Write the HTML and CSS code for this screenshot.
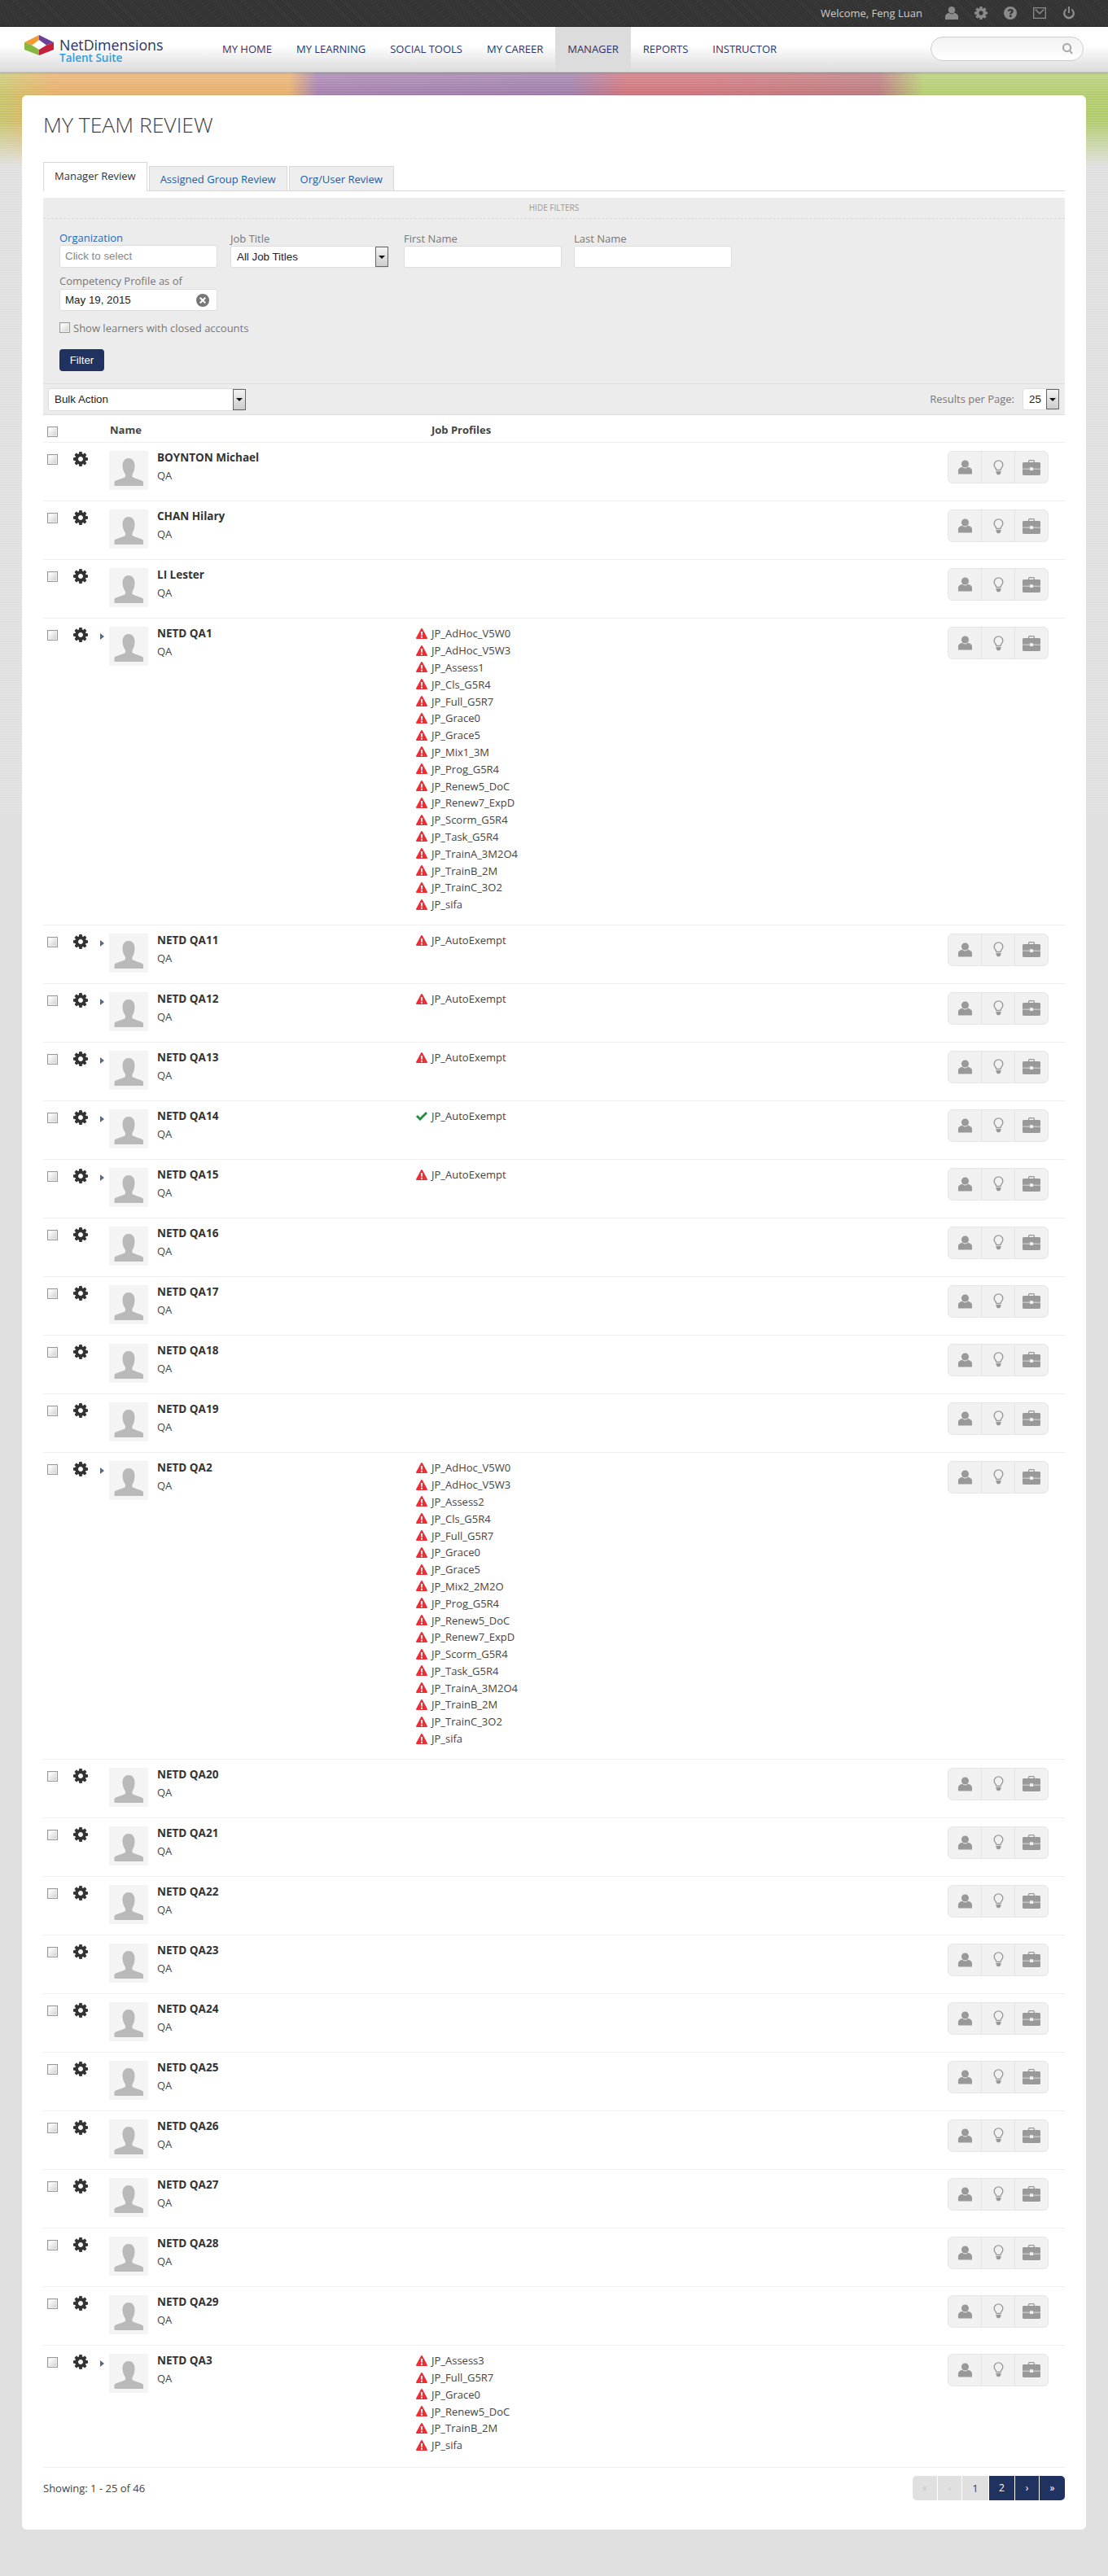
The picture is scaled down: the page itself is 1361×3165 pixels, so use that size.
FILE: index.html
```html
<!DOCTYPE html>
<html lang="en">
<head>
    <meta charset="UTF-8">
    <title>My Team Review</title>
    <link rel="stylesheet" href="styles.css">
</head>
<body>
    <svg class="sprite">
        <symbol id="i-gear" viewBox="0 0 1536 1536"><path d="M1024 768q0-106-75-181t-181-75-181 75-75 181 75 181 181 75 181-75 75-181zm512-109v222q0 12-8 23t-20 13l-185 28q-19 54-39 91 35 50 107 138 10 12 10 25t-9 23q-27 37-99 108t-94 71q-12 0-26-9l-138-108q-44 23-91 38-16 136-29 186-7 28-36 28h-222q-14 0-24.500-8.500t-11.500-21.500l-28-184q-49-16-90-37l-141 107q-10 9-25 9-14 0-25-11-126-114-165-168-7-10-7-23 0-12 8-23 15-21 51-66.500t54-70.500q-27-50-41-99l-183-27q-13-2-21-12.500t-8-23.500v-222q0-12 8-23t19-13l186-28q14-46 39-92-40-57-107-138-10-12-10-24 0-10 9-23 26-36 98.500-107.500t94.500-71.500q13 0 26 10l138 107q44-23 91-38 16-136 29-186 7-28 36-28h222q14 0 24.500 8.500t11.500 21.500l28 184q49 16 90 37l142-107q9-9 24-9 13 0 25 10 129 119 165 170 7 8 7 22 0 12-8 23-15 21-51 66.500t-54 70.500q26 50 41 98l183 28q13 2 21 12.500t8 23.500z"/></symbol>
        <symbol id="i-user" viewBox="0 0 18 18"><circle cx="9" cy="4.800" r="4.800"/><path d="M0 18v-4.500C0 11 3 9.300 5.300 8.800 6.300 9.900 7.600 10.500 9 10.500s2.700-.6 3.700-1.700C15 9.300 18 11 18 13.500V18z"/></symbol>
        <symbol id="i-bulb" viewBox="0 0 14 20"><path fill-rule="evenodd" d="M7 0a6.500 6.500 0 0 1 6.500 6.500c0 2.600-1.800 3.800-2.500 5.500-.3.700-.4 1.200-.5 1.700h-7c-.1-.5-.2-1-.5-1.700C2.300 10.300.5 9.100.5 6.500A6.500 6.500 0 0 1 7 0zm0 1.500a5 5 0 0 0-5 5c0 2 1.500 3 2.300 4.800.2.500.4.900.5 1.200h4.400c.1-.3.300-.7.500-1.200C10.500 9.500 12 8.500 12 6.500a5 5 0 0 0-5-5z"/><path d="M3.800 14.500h6.400v2.500L8.500 19.500h-3L3.800 17z"/></symbol>
        <symbol id="i-case" viewBox="0 0 22 19"><path fill-rule="evenodd" d="M7 3V1.500C7 .7 7.700 0 8.500 0h5C14.300 0 15 .7 15 1.500V3h5.500c.8 0 1.500.7 1.500 1.500v6.300h-9V9.300H9v1.500H0V4.500C0 3.700.7 3 1.500 3zm1.300 0h5.400V1.300H8.300z"/><path d="M0 11.400h9V13h4v-1.600h9v6.100c0 .8-.7 1.500-1.500 1.500h-19C.7 19 0 18.300 0 17.500z"/></symbol>
        <symbol id="i-help" viewBox="0 0 16 16"><path fill-rule="evenodd" d="M8 0a8 8 0 1 1 0 16A8 8 0 0 1 8 0zM7 10.500v2.500h2.500v-2.500zM8.200 3C6.300 3 5 4 4.700 5.700l2.300.4c.1-.7.500-1.100 1.100-1.100.6 0 1 .3 1 .9 0 .5-.3.800-.9 1.300C7.400 7.800 7 8.400 7 9.600h2.400c0-.6.200-.9.900-1.400.8-.6 1.500-1.300 1.500-2.500C11.800 4 10.300 3 8.200 3z"/></symbol>
        <symbol id="i-mail" viewBox="0 0 18 16"><path fill-rule="evenodd" d="M0 0h18v16H0zm1.500 1.500v13h15v-13zm1 1.500h1.800L9 7.800 13.700 3h1.800v.6L9 10 2.500 3.600z"/></symbol>
        <symbol id="i-power" viewBox="0 0 16 18"><path d="M6.800 0h2.400v9H6.800z"/><path d="M4.500 2.600v2.700a5.200 5.200 0 1 0 7 0V2.600a7.800 7.800 0 1 1-7 0z"/></symbol>
        <symbol id="i-search" viewBox="0 0 14 15"><path fill-rule="evenodd" d="M6 0a6 6 0 0 1 4.800 9.600l3 3.600-1.700 1.500-3-3.700A6 6 0 1 1 6 0zm0 2.200a3.800 3.800 0 1 0 0 7.600 3.800 3.800 0 0 0 0-7.600z"/></symbol>
        <symbol id="i-warn" viewBox="0 0 14 13"><path fill-rule="evenodd" d="M7 0c.4 0 .7.200.9.500l5.900 11c.3.600-.1 1.500-.9 1.500H1.100c-.8 0-1.200-.9-.9-1.500L6.100.5C6.300.2 6.600 0 7 0zM5.900 4l.3 4.800h1.600L8.100 4zm.1 5.800v2h2v-2z"/></symbol>
        <symbol id="i-ok" viewBox="0 0 14 11"><path d="M5 11 0 6l2-2 3 3 7-7 2 2z"/></symbol>
        <symbol id="i-person" viewBox="0 0 48 48"><path d="M24 9c4.500 0 7.500 3.200 7.500 9.500 0 4.500-1.500 8-3 10.500v3c1.500 1.500 12 3.500 13.500 6v5H6.500v-5c1.500-2.500 12-4.500 13.500-6v-3c-1.500-2.500-3.500-6-3.500-10.500C16.500 12.200 19.500 9 24 9z"/></symbol>
        <symbol id="i-clear" viewBox="0 0 16 16"><path fill-rule="evenodd" d="M8 0a8 8 0 1 1 0 16A8 8 0 0 1 8 0zM5.500 4 4 5.500 6.500 8 4 10.500 5.500 12 8 9.500l2.500 2.500 1.500-1.500L9.500 8 12 5.500 10.500 4 8 6.500z"/></symbol>
    </svg>

    <div class="topbar">
        <span class="welcome">Welcome, Feng Luan</span>
        <svg class="top-icon"><use href="#i-user"/></svg>
        <svg class="top-icon"><use href="#i-gear"/></svg>
        <svg class="top-icon"><use href="#i-help"/></svg>
        <svg class="top-icon"><use href="#i-mail"/></svg>
        <svg class="top-icon"><use href="#i-power"/></svg>
    </div>

    <div class="nav">
        <div class="logo">
            <svg class="logo-mark" viewBox="0 0 36 25">
                <polygon fill="#f59a2f" points="18,0 0,9 9,12.500 18,6"/>
                <polygon fill="#6c3f98" points="18,0 36,9 27,12.500 18,6"/>
                <polygon fill="#c4203c" points="36,9 36,18 18,25 18,18 27,12.500"/>
                <polygon fill="#86b83f" points="0,9 9,12.500 18,18 18,25 0,18"/>
            </svg>
            <div class="logo-text">
                <div class="logo-name">NetDimensions</div>
                <div class="logo-sub">Talent Suite</div>
            </div>
        </div>
        <div class="menu">
            <a class="menu-item">My Home</a>
            <a class="menu-item">My Learning</a>
            <a class="menu-item">Social Tools</a>
            <a class="menu-item">My Career</a>
            <a class="menu-item active">Manager</a>
            <a class="menu-item">Reports</a>
            <a class="menu-item">Instructor</a>
        </div>
        <div class="search">
            <svg class="search-icon"><use href="#i-search"/></svg>
        </div>
    </div>

    <div class="card">
        <h1>My Team Review</h1>

        <div class="tabs">
            <a class="tab active">Manager Review</a>
            <a class="tab">Assigned Group Review</a>
            <a class="tab">Org/User Review</a>
        </div>

        <div class="filters">
            <div class="hide-filters">Hide Filters</div>
            <div class="filter-body">
                <div class="filter-grid">
                    <div>
                        <div class="field-label link">Organization</div>
                        <div class="input placeholder">Click to select</div>
                    </div>
                    <div class="shifted">
                        <div class="field-label">Job Title</div>
                        <div class="select job-select">
                            <span>All Job Titles</span>
                            <span class="select-arrow"></span>
                        </div>
                    </div>
                    <div class="shifted">
                        <div class="field-label">First Name</div>
                        <div class="input"></div>
                    </div>
                    <div class="shifted">
                        <div class="field-label">Last Name</div>
                        <div class="input"></div>
                    </div>
                </div>
                <div class="field-label date-label">Competency Profile as of</div>
                <div class="input date-input">
                    <span>May 19, 2015</span>
                    <svg class="clear-icon"><use href="#i-clear"/></svg>
                </div>
                <label class="closed-accounts"><span class="check"></span>Show learners with closed accounts</label>
                <button class="filter-btn">Filter</button>
            </div>
            <div class="bulk-bar">
                <div class="select bulk-select">
                    <span>Bulk Action</span>
                    <span class="select-arrow"></span>
                </div>
                <div class="per-page">
                    <span>Results per Page:</span>
                    <div class="select page-select">
                        <span>25</span>
                        <span class="select-arrow"></span>
                    </div>
                </div>
            </div>
        </div>

        <div class="list-head">
            <span class="check"></span>
            <span class="head-name">Name</span>
            <span class="head-jobs">Job Profiles</span>
        </div>

        <div class="row">
            <span class="check"></span><svg class="gear"><use href="#i-gear"/></svg><span></span>
            <div class="avatar"><svg><use href="#i-person"/></svg></div>
            <div><div class="name">BOYNTON Michael</div><div class="role">QA</div></div>
            <div></div>
            <div class="actions"><a><svg class="a-user"><use href="#i-user"/></svg></a><a><svg class="a-bulb"><use href="#i-bulb"/></svg></a><a><svg class="a-case"><use href="#i-case"/></svg></a></div>
        </div>
        <div class="row">
            <span class="check"></span><svg class="gear"><use href="#i-gear"/></svg><span></span>
            <div class="avatar"><svg><use href="#i-person"/></svg></div>
            <div><div class="name">CHAN Hilary</div><div class="role">QA</div></div>
            <div></div>
            <div class="actions"><a><svg class="a-user"><use href="#i-user"/></svg></a><a><svg class="a-bulb"><use href="#i-bulb"/></svg></a><a><svg class="a-case"><use href="#i-case"/></svg></a></div>
        </div>
        <div class="row">
            <span class="check"></span><svg class="gear"><use href="#i-gear"/></svg><span></span>
            <div class="avatar"><svg><use href="#i-person"/></svg></div>
            <div><div class="name">LI Lester</div><div class="role">QA</div></div>
            <div></div>
            <div class="actions"><a><svg class="a-user"><use href="#i-user"/></svg></a><a><svg class="a-bulb"><use href="#i-bulb"/></svg></a><a><svg class="a-case"><use href="#i-case"/></svg></a></div>
        </div>
        <div class="row">
            <span class="check"></span><svg class="gear"><use href="#i-gear"/></svg><span class="caret"></span>
            <div class="avatar"><svg><use href="#i-person"/></svg></div>
            <div><div class="name">NETD QA1</div><div class="role">QA</div></div>
            <div class="jobs">
                <div class="job"><svg class="warn"><use href="#i-warn"/></svg>JP_AdHoc_V5W0</div>
                <div class="job"><svg class="warn"><use href="#i-warn"/></svg>JP_AdHoc_V5W3</div>
                <div class="job"><svg class="warn"><use href="#i-warn"/></svg>JP_Assess1</div>
                <div class="job"><svg class="warn"><use href="#i-warn"/></svg>JP_Cls_G5R4</div>
                <div class="job"><svg class="warn"><use href="#i-warn"/></svg>JP_Full_G5R7</div>
                <div class="job"><svg class="warn"><use href="#i-warn"/></svg>JP_Grace0</div>
                <div class="job"><svg class="warn"><use href="#i-warn"/></svg>JP_Grace5</div>
                <div class="job"><svg class="warn"><use href="#i-warn"/></svg>JP_Mix1_3M</div>
                <div class="job"><svg class="warn"><use href="#i-warn"/></svg>JP_Prog_G5R4</div>
                <div class="job"><svg class="warn"><use href="#i-warn"/></svg>JP_Renew5_DoC</div>
                <div class="job"><svg class="warn"><use href="#i-warn"/></svg>JP_Renew7_ExpD</div>
                <div class="job"><svg class="warn"><use href="#i-warn"/></svg>JP_Scorm_G5R4</div>
                <div class="job"><svg class="warn"><use href="#i-warn"/></svg>JP_Task_G5R4</div>
                <div class="job"><svg class="warn"><use href="#i-warn"/></svg>JP_TrainA_3M2O4</div>
                <div class="job"><svg class="warn"><use href="#i-warn"/></svg>JP_TrainB_2M</div>
                <div class="job"><svg class="warn"><use href="#i-warn"/></svg>JP_TrainC_3O2</div>
                <div class="job"><svg class="warn"><use href="#i-warn"/></svg>JP_sifa</div>
            </div>
            <div class="actions"><a><svg class="a-user"><use href="#i-user"/></svg></a><a><svg class="a-bulb"><use href="#i-bulb"/></svg></a><a><svg class="a-case"><use href="#i-case"/></svg></a></div>
        </div>
        <div class="row">
            <span class="check"></span><svg class="gear"><use href="#i-gear"/></svg><span class="caret"></span>
            <div class="avatar"><svg><use href="#i-person"/></svg></div>
            <div><div class="name">NETD QA11</div><div class="role">QA</div></div>
            <div class="jobs"><div class="job"><svg class="warn"><use href="#i-warn"/></svg>JP_AutoExempt</div></div>
            <div class="actions"><a><svg class="a-user"><use href="#i-user"/></svg></a><a><svg class="a-bulb"><use href="#i-bulb"/></svg></a><a><svg class="a-case"><use href="#i-case"/></svg></a></div>
        </div>
        <div class="row">
            <span class="check"></span><svg class="gear"><use href="#i-gear"/></svg><span class="caret"></span>
            <div class="avatar"><svg><use href="#i-person"/></svg></div>
            <div><div class="name">NETD QA12</div><div class="role">QA</div></div>
            <div class="jobs"><div class="job"><svg class="warn"><use href="#i-warn"/></svg>JP_AutoExempt</div></div>
            <div class="actions"><a><svg class="a-user"><use href="#i-user"/></svg></a><a><svg class="a-bulb"><use href="#i-bulb"/></svg></a><a><svg class="a-case"><use href="#i-case"/></svg></a></div>
        </div>
        <div class="row">
            <span class="check"></span><svg class="gear"><use href="#i-gear"/></svg><span class="caret"></span>
            <div class="avatar"><svg><use href="#i-person"/></svg></div>
            <div><div class="name">NETD QA13</div><div class="role">QA</div></div>
            <div class="jobs"><div class="job"><svg class="warn"><use href="#i-warn"/></svg>JP_AutoExempt</div></div>
            <div class="actions"><a><svg class="a-user"><use href="#i-user"/></svg></a><a><svg class="a-bulb"><use href="#i-bulb"/></svg></a><a><svg class="a-case"><use href="#i-case"/></svg></a></div>
        </div>
        <div class="row">
            <span class="check"></span><svg class="gear"><use href="#i-gear"/></svg><span class="caret"></span>
            <div class="avatar"><svg><use href="#i-person"/></svg></div>
            <div><div class="name">NETD QA14</div><div class="role">QA</div></div>
            <div class="jobs"><div class="job"><svg class="ok"><use href="#i-ok"/></svg>JP_AutoExempt</div></div>
            <div class="actions"><a><svg class="a-user"><use href="#i-user"/></svg></a><a><svg class="a-bulb"><use href="#i-bulb"/></svg></a><a><svg class="a-case"><use href="#i-case"/></svg></a></div>
        </div>
        <div class="row">
            <span class="check"></span><svg class="gear"><use href="#i-gear"/></svg><span class="caret"></span>
            <div class="avatar"><svg><use href="#i-person"/></svg></div>
            <div><div class="name">NETD QA15</div><div class="role">QA</div></div>
            <div class="jobs"><div class="job"><svg class="warn"><use href="#i-warn"/></svg>JP_AutoExempt</div></div>
            <div class="actions"><a><svg class="a-user"><use href="#i-user"/></svg></a><a><svg class="a-bulb"><use href="#i-bulb"/></svg></a><a><svg class="a-case"><use href="#i-case"/></svg></a></div>
        </div>
        <div class="row">
            <span class="check"></span><svg class="gear"><use href="#i-gear"/></svg><span></span>
            <div class="avatar"><svg><use href="#i-person"/></svg></div>
            <div><div class="name">NETD QA16</div><div class="role">QA</div></div>
            <div></div>
            <div class="actions"><a><svg class="a-user"><use href="#i-user"/></svg></a><a><svg class="a-bulb"><use href="#i-bulb"/></svg></a><a><svg class="a-case"><use href="#i-case"/></svg></a></div>
        </div>
        <div class="row">
            <span class="check"></span><svg class="gear"><use href="#i-gear"/></svg><span></span>
            <div class="avatar"><svg><use href="#i-person"/></svg></div>
            <div><div class="name">NETD QA17</div><div class="role">QA</div></div>
            <div></div>
            <div class="actions"><a><svg class="a-user"><use href="#i-user"/></svg></a><a><svg class="a-bulb"><use href="#i-bulb"/></svg></a><a><svg class="a-case"><use href="#i-case"/></svg></a></div>
        </div>
        <div class="row">
            <span class="check"></span><svg class="gear"><use href="#i-gear"/></svg><span></span>
            <div class="avatar"><svg><use href="#i-person"/></svg></div>
            <div><div class="name">NETD QA18</div><div class="role">QA</div></div>
            <div></div>
            <div class="actions"><a><svg class="a-user"><use href="#i-user"/></svg></a><a><svg class="a-bulb"><use href="#i-bulb"/></svg></a><a><svg class="a-case"><use href="#i-case"/></svg></a></div>
        </div>
        <div class="row">
            <span class="check"></span><svg class="gear"><use href="#i-gear"/></svg><span></span>
            <div class="avatar"><svg><use href="#i-person"/></svg></div>
            <div><div class="name">NETD QA19</div><div class="role">QA</div></div>
            <div></div>
            <div class="actions"><a><svg class="a-user"><use href="#i-user"/></svg></a><a><svg class="a-bulb"><use href="#i-bulb"/></svg></a><a><svg class="a-case"><use href="#i-case"/></svg></a></div>
        </div>
        <div class="row">
            <span class="check"></span><svg class="gear"><use href="#i-gear"/></svg><span class="caret"></span>
            <div class="avatar"><svg><use href="#i-person"/></svg></div>
            <div><div class="name">NETD QA2</div><div class="role">QA</div></div>
            <div class="jobs">
                <div class="job"><svg class="warn"><use href="#i-warn"/></svg>JP_AdHoc_V5W0</div>
                <div class="job"><svg class="warn"><use href="#i-warn"/></svg>JP_AdHoc_V5W3</div>
                <div class="job"><svg class="warn"><use href="#i-warn"/></svg>JP_Assess2</div>
                <div class="job"><svg class="warn"><use href="#i-warn"/></svg>JP_Cls_G5R4</div>
                <div class="job"><svg class="warn"><use href="#i-warn"/></svg>JP_Full_G5R7</div>
                <div class="job"><svg class="warn"><use href="#i-warn"/></svg>JP_Grace0</div>
                <div class="job"><svg class="warn"><use href="#i-warn"/></svg>JP_Grace5</div>
                <div class="job"><svg class="warn"><use href="#i-warn"/></svg>JP_Mix2_2M2O</div>
                <div class="job"><svg class="warn"><use href="#i-warn"/></svg>JP_Prog_G5R4</div>
                <div class="job"><svg class="warn"><use href="#i-warn"/></svg>JP_Renew5_DoC</div>
                <div class="job"><svg class="warn"><use href="#i-warn"/></svg>JP_Renew7_ExpD</div>
                <div class="job"><svg class="warn"><use href="#i-warn"/></svg>JP_Scorm_G5R4</div>
                <div class="job"><svg class="warn"><use href="#i-warn"/></svg>JP_Task_G5R4</div>
                <div class="job"><svg class="warn"><use href="#i-warn"/></svg>JP_TrainA_3M2O4</div>
                <div class="job"><svg class="warn"><use href="#i-warn"/></svg>JP_TrainB_2M</div>
                <div class="job"><svg class="warn"><use href="#i-warn"/></svg>JP_TrainC_3O2</div>
                <div class="job"><svg class="warn"><use href="#i-warn"/></svg>JP_sifa</div>
            </div>
            <div class="actions"><a><svg class="a-user"><use href="#i-user"/></svg></a><a><svg class="a-bulb"><use href="#i-bulb"/></svg></a><a><svg class="a-case"><use href="#i-case"/></svg></a></div>
        </div>
        <div class="row">
            <span class="check"></span><svg class="gear"><use href="#i-gear"/></svg><span></span>
            <div class="avatar"><svg><use href="#i-person"/></svg></div>
            <div><div class="name">NETD QA20</div><div class="role">QA</div></div>
            <div></div>
            <div class="actions"><a><svg class="a-user"><use href="#i-user"/></svg></a><a><svg class="a-bulb"><use href="#i-bulb"/></svg></a><a><svg class="a-case"><use href="#i-case"/></svg></a></div>
        </div>
        <div class="row">
            <span class="check"></span><svg class="gear"><use href="#i-gear"/></svg><span></span>
            <div class="avatar"><svg><use href="#i-person"/></svg></div>
            <div><div class="name">NETD QA21</div><div class="role">QA</div></div>
            <div></div>
            <div class="actions"><a><svg class="a-user"><use href="#i-user"/></svg></a><a><svg class="a-bulb"><use href="#i-bulb"/></svg></a><a><svg class="a-case"><use href="#i-case"/></svg></a></div>
        </div>
        <div class="row">
            <span class="check"></span><svg class="gear"><use href="#i-gear"/></svg><span></span>
            <div class="avatar"><svg><use href="#i-person"/></svg></div>
            <div><div class="name">NETD QA22</div><div class="role">QA</div></div>
            <div></div>
            <div class="actions"><a><svg class="a-user"><use href="#i-user"/></svg></a><a><svg class="a-bulb"><use href="#i-bulb"/></svg></a><a><svg class="a-case"><use href="#i-case"/></svg></a></div>
        </div>
        <div class="row">
            <span class="check"></span><svg class="gear"><use href="#i-gear"/></svg><span></span>
            <div class="avatar"><svg><use href="#i-person"/></svg></div>
            <div><div class="name">NETD QA23</div><div class="role">QA</div></div>
            <div></div>
            <div class="actions"><a><svg class="a-user"><use href="#i-user"/></svg></a><a><svg class="a-bulb"><use href="#i-bulb"/></svg></a><a><svg class="a-case"><use href="#i-case"/></svg></a></div>
        </div>
        <div class="row">
            <span class="check"></span><svg class="gear"><use href="#i-gear"/></svg><span></span>
            <div class="avatar"><svg><use href="#i-person"/></svg></div>
            <div><div class="name">NETD QA24</div><div class="role">QA</div></div>
            <div></div>
            <div class="actions"><a><svg class="a-user"><use href="#i-user"/></svg></a><a><svg class="a-bulb"><use href="#i-bulb"/></svg></a><a><svg class="a-case"><use href="#i-case"/></svg></a></div>
        </div>
        <div class="row">
            <span class="check"></span><svg class="gear"><use href="#i-gear"/></svg><span></span>
            <div class="avatar"><svg><use href="#i-person"/></svg></div>
            <div><div class="name">NETD QA25</div><div class="role">QA</div></div>
            <div></div>
            <div class="actions"><a><svg class="a-user"><use href="#i-user"/></svg></a><a><svg class="a-bulb"><use href="#i-bulb"/></svg></a><a><svg class="a-case"><use href="#i-case"/></svg></a></div>
        </div>
        <div class="row">
            <span class="check"></span><svg class="gear"><use href="#i-gear"/></svg><span></span>
            <div class="avatar"><svg><use href="#i-person"/></svg></div>
            <div><div class="name">NETD QA26</div><div class="role">QA</div></div>
            <div></div>
            <div class="actions"><a><svg class="a-user"><use href="#i-user"/></svg></a><a><svg class="a-bulb"><use href="#i-bulb"/></svg></a><a><svg class="a-case"><use href="#i-case"/></svg></a></div>
        </div>
        <div class="row">
            <span class="check"></span><svg class="gear"><use href="#i-gear"/></svg><span></span>
            <div class="avatar"><svg><use href="#i-person"/></svg></div>
            <div><div class="name">NETD QA27</div><div class="role">QA</div></div>
            <div></div>
            <div class="actions"><a><svg class="a-user"><use href="#i-user"/></svg></a><a><svg class="a-bulb"><use href="#i-bulb"/></svg></a><a><svg class="a-case"><use href="#i-case"/></svg></a></div>
        </div>
        <div class="row">
            <span class="check"></span><svg class="gear"><use href="#i-gear"/></svg><span></span>
            <div class="avatar"><svg><use href="#i-person"/></svg></div>
            <div><div class="name">NETD QA28</div><div class="role">QA</div></div>
            <div></div>
            <div class="actions"><a><svg class="a-user"><use href="#i-user"/></svg></a><a><svg class="a-bulb"><use href="#i-bulb"/></svg></a><a><svg class="a-case"><use href="#i-case"/></svg></a></div>
        </div>
        <div class="row">
            <span class="check"></span><svg class="gear"><use href="#i-gear"/></svg><span></span>
            <div class="avatar"><svg><use href="#i-person"/></svg></div>
            <div><div class="name">NETD QA29</div><div class="role">QA</div></div>
            <div></div>
            <div class="actions"><a><svg class="a-user"><use href="#i-user"/></svg></a><a><svg class="a-bulb"><use href="#i-bulb"/></svg></a><a><svg class="a-case"><use href="#i-case"/></svg></a></div>
        </div>
        <div class="row row-last">
            <span class="check"></span><svg class="gear"><use href="#i-gear"/></svg><span class="caret"></span>
            <div class="avatar"><svg><use href="#i-person"/></svg></div>
            <div><div class="name">NETD QA3</div><div class="role">QA</div></div>
            <div class="jobs">
                <div class="job"><svg class="warn"><use href="#i-warn"/></svg>JP_Assess3</div>
                <div class="job"><svg class="warn"><use href="#i-warn"/></svg>JP_Full_G5R7</div>
                <div class="job"><svg class="warn"><use href="#i-warn"/></svg>JP_Grace0</div>
                <div class="job"><svg class="warn"><use href="#i-warn"/></svg>JP_Renew5_DoC</div>
                <div class="job"><svg class="warn"><use href="#i-warn"/></svg>JP_TrainB_2M</div>
                <div class="job"><svg class="warn"><use href="#i-warn"/></svg>JP_sifa</div>
            </div>
            <div class="actions"><a><svg class="a-user"><use href="#i-user"/></svg></a><a><svg class="a-bulb"><use href="#i-bulb"/></svg></a><a><svg class="a-case"><use href="#i-case"/></svg></a></div>
        </div>

        <div class="list-foot">
            <span class="showing">Showing: 1 - 25 of 46</span>
            <div class="pager">
                <a class="off first">«</a>
                <a class="off prev">‹</a>
                <a class="num">1</a>
                <a class="on two">2</a>
                <a class="on next">›</a>
                <a class="on last">»</a>
            </div>
        </div>
    </div>
</body>
</html>
```

FILE: styles.css
```css
body {
    margin: 0;
    padding-bottom: 56px;
    font-family: "Open Sans", sans-serif;
    font-size: 13px;
    color: #444;
    background-color: #e0e0e0;
    background-image:
        repeating-linear-gradient(0deg, rgba(255, 255, 255, 0.14) 0 1px, transparent 1px 3px),
        linear-gradient(to bottom, rgba(255, 255, 255, 0.2) 89px, rgba(255, 255, 255, 0) 118px),
        linear-gradient(to bottom, rgba(224, 224, 224, 0) 148px, #e0e0e0 205px),
        linear-gradient(to right, #c6c46c 0, #d8b864 30px, #e6ac66 70px, #e6ac66 355px, #a27cab 390px, #9b78a6 700px, #cc6e76 770px, #cc6e76 850px, #b9757a 1080px, #b2cb6c 1135px, #b2cb6c 100%);
    background-repeat: no-repeat;
    background-size: 100% 1000px, 100% 118px, 100% 205px, 100% 205px;
}

.sprite {
    display: none;
}

a {
    text-decoration: none;
}

/* top strip */
.topbar {
    height: 32px;
    border-bottom: 1px solid #222;
    display: flex;
    align-items: center;
    justify-content: flex-end;
    gap: 20px;
    padding-right: 40px;
    background-color: #333;
    background-image: repeating-linear-gradient(45deg, rgba(255, 255, 255, 0.04) 0 1px, transparent 1px 3px);
}

.welcome {
    color: #ccc;
    margin-right: 8px;
}

.top-icon {
    width: 16px;
    height: 16px;
    fill: #8a8a8a;
}

/* main nav */
.nav {
    height: 55px;
    border-bottom: 1px solid #ccc;
    display: flex;
    background: linear-gradient(to bottom, #fff 40%, #dcdcdc 100%);
    box-shadow: 0 1px 2px rgba(0, 0, 0, 0.2);
}

.logo {
    width: 258px;
    padding: 10px 0 0 30px;
    box-sizing: border-box;
    display: flex;
    gap: 7px;
}

.logo-mark {
    width: 36px;
    height: 25px;
}

.logo-text {
    margin-top: 3px;
}

.logo-name {
    font-size: 17.800px;
    line-height: 19px;
    color: #2a3566;
}

.logo-sub {
    font-size: 13.500px;
    line-height: 13px;
    font-weight: 600;
    color: #2fa0da;
}

.menu {
    display: flex;
    align-items: stretch;
}

.menu-item {
    padding: 0 15px;
    line-height: 55px;
    text-transform: uppercase;
    color: #2a3566;
}

.menu-item.active {
    background-color: #dcdcdc;
}

.search {
    width: 188px;
    height: 30px;
    box-sizing: border-box;
    margin: 12px 30px 0 auto;
    border: 1px solid #ccc;
    border-radius: 15px;
    background: linear-gradient(to bottom, #f2f2f2, #fff);
    display: flex;
    align-items: center;
    justify-content: flex-end;
    padding-right: 12px;
}

.search-icon {
    width: 13px;
    height: 14px;
    fill: #aaa;
}

/* content card */
.card {
    width: 1255px;
    margin: 28px 0 0 27px;
    padding: 0 26px 36px;
    background-color: #fff;
    border-radius: 6px;
}

h1 {
    margin: 0;
    height: 82px;
    padding-top: 17px;
    box-sizing: border-box;
    font-size: 26.500px;
    line-height: 38px;
    font-weight: 300;
    text-transform: uppercase;
    color: #444;
}

.tabs {
    display: flex;
    align-items: flex-end;
    gap: 2px;
    height: 36px;
    box-shadow: inset 0 -1px 0 #d8d8d8;
}

.tab {
    height: 31px;
    box-sizing: border-box;
    padding: 0 13px;
    line-height: 30px;
    border: 1px solid #d8d8d8;
    background-color: #eee;
    color: #1c5ea5;
}

.tab.active {
    height: 36px;
    line-height: 32px;
    border-bottom: none;
    background-color: #fff;
    color: #333;
}

/* filter panel */
.filters {
    margin-top: 8px;
    background-color: #ececec;
    border-bottom: 1px solid #ddd;
}

.hide-filters {
    height: 25px;
    border-bottom: 1px dashed #d8d8d8;
    text-align: center;
    font-size: 10px;
    line-height: 24px;
    text-transform: uppercase;
    color: #999;
}

.filter-body {
    padding: 15px 20px 15px;
}

.filter-grid {
    display: grid;
    grid-template-columns: 210px 213px 209px 195px;
}

.field-label {
    height: 17px;
    line-height: 16px;
    color: #777;
}

.field-label.link {
    color: #1e6bb8;
}

.shifted {
    padding-top: 1px;
}

.input {
    width: 194px;
    height: 28px;
    box-sizing: border-box;
    padding: 0 6px;
    border: 1px solid #ddd;
    border-radius: 3px;
    background-color: #fff;
    font-family: "Liberation Sans", sans-serif;
    font-size: 13.333px;
    line-height: 26px;
    color: #222;
}

.shifted .input {
    height: 27px;
}

.placeholder {
    color: #888;
}

.date-label {
    margin-top: 8px;
    height: 18px;
}

.date-input {
    height: 27px;
    display: flex;
    justify-content: space-between;
    align-items: center;
}

.clear-icon {
    width: 16px;
    height: 16px;
    fill: #777;
    margin-right: 3px;
}

.closed-accounts {
    display: flex;
    align-items: center;
    gap: 4px;
    margin-top: 14px;
    height: 13px;
    color: #777;
}

.filter-btn {
    display: block;
    width: 55px;
    height: 27px;
    margin-top: 20px;
    padding: 0;
    border: none;
    border-radius: 4px;
    background-color: #20325f;
    font-family: "Liberation Sans", sans-serif;
    font-size: 13.333px;
    color: #fff;
}

.select {
    height: 27px;
    box-sizing: border-box;
    padding-left: 7px;
    border: 1px solid #ddd;
    border-radius: 3px;
    background-color: #fff;
    display: flex;
    justify-content: space-between;
    font-family: "Liberation Sans", sans-serif;
    font-size: 13.333px;
    line-height: 25px;
    color: #222;
}

.select-arrow {
    width: 16px;
    margin: 0 -1px 0 0;
    box-sizing: border-box;
    border: 1px solid #666;
    background: linear-gradient(to bottom, #f4f4f4, #ccc);
    position: relative;
}

.select-arrow::after {
    content: "";
    position: absolute;
    left: 3px;
    top: 10px;
    border: 4px solid transparent;
    border-top-color: #111;
}

.job-select {
    width: 194px;
}

.bulk-bar {
    height: 38px;
    box-sizing: border-box;
    border-top: 1px solid #e0e0e0;
    padding: 5px 7px 0 6px;
    display: flex;
    justify-content: space-between;
}

.bulk-select {
    width: 243px;
    height: 28px;
    line-height: 26px;
}

.per-page {
    display: flex;
    gap: 10px;
    line-height: 26px;
    color: #777;
}

.page-select {
    width: 45px;
}

/* checkbox look */
.check {
    display: block;
    width: 13px;
    height: 13px;
    box-sizing: border-box;
    flex: none;
    border: 1px solid #999;
    background: linear-gradient(135deg, #fff 15%, #ccc 100%);
    box-shadow: inset 0 0 0 1px #eee;
}

/* list */
.list-head {
    height: 34px;
    box-sizing: border-box;
    border-bottom: 1px solid #eee;
    padding-top: 10px;
    padding-left: 5px;
    display: flex;
    font-weight: 700;
    line-height: 17px;
    color: #444;
}

.list-head .check {
    margin-top: 4px;
}

.head-name {
    width: 395px;
    padding-left: 64px;
}

.row {
    display: grid;
    grid-template-columns: 32px 33px 11px 59px 318px 1fr auto;
    align-items: start;
    padding: 10px 20px 13px 5px;
    border-bottom: 1px solid #eee;
}

.row-last {
    padding-bottom: 15px;
}

.row .check {
    margin-top: 4px;
}

.gear {
    width: 18px;
    height: 18px;
    margin-top: 1px;
    fill: #333;
}

.caret {
    width: 0;
    height: 0;
    margin-top: 8px;
    border: 4px solid transparent;
    border-left: 5px solid #5a6b80;
}

.avatar {
    width: 48px;
    height: 48px;
    background-color: #f4f4f4;
}

.avatar svg {
    display: block;
    width: 48px;
    height: 48px;
    fill: #b9b9b9;
}

.name {
    font-size: 13.500px;
    font-weight: 700;
    line-height: 17px;
    color: #333;
}

.role {
    margin-top: 3px;
    line-height: 20px;
    color: #444;
}

.jobs {
    margin: -2px 0 1.400px;
}

.job {
    display: flex;
    align-items: center;
    height: 20.800px;
    color: #444;
}

.warn {
    width: 14px;
    height: 13px;
    margin-right: 5px;
    fill: #ee2d34;
}

.ok {
    width: 14px;
    height: 11px;
    margin-right: 5px;
    fill: #1d8f3d;
}

.actions {
    display: flex;
    width: 124px;
    height: 40px;
    box-sizing: border-box;
    border: 1px solid #e6e6e6;
    border-radius: 6px;
    background-color: #f1f1f1;
}

.actions a {
    flex: 1;
    display: flex;
    align-items: center;
    justify-content: center;
    border-left: 1px solid #e4e4e4;
}

.actions a:first-child {
    border-left: none;
}

.actions svg {
    fill: #999;
}

.a-user {
    width: 17px;
    height: 18px;
}

.a-bulb {
    width: 13px;
    height: 19px;
}

.a-case {
    width: 22px;
    height: 19px;
}

/* footer */
.list-foot {
    display: flex;
    justify-content: space-between;
    padding-top: 10px;
}

.showing {
    line-height: 30px;
    color: #444;
}

.pager {
    display: flex;
    gap: 1px;
    height: 30px;
    line-height: 30px;
    text-align: center;
}

.pager a {
    display: block;
    font-size: 12px;
}

.pager .off {
    background-color: #e0e0e0;
    color: #c8c8c8;
}

.pager .num {
    background-color: #e0e0e0;
    color: #444;
    width: 32px;
    font-size: 13px;
}

.pager .on {
    background-color: #20325f;
    color: #fff;
}

.first {
    width: 30px;
    border-radius: 5px 0 0 5px;
}

.prev {
    width: 29px;
}

.two {
    width: 31px;
    font-size: 13px;
}

.next {
    width: 29px;
}

.last {
    width: 31px;
    border-radius: 0 5px 5px 0;
}
```
